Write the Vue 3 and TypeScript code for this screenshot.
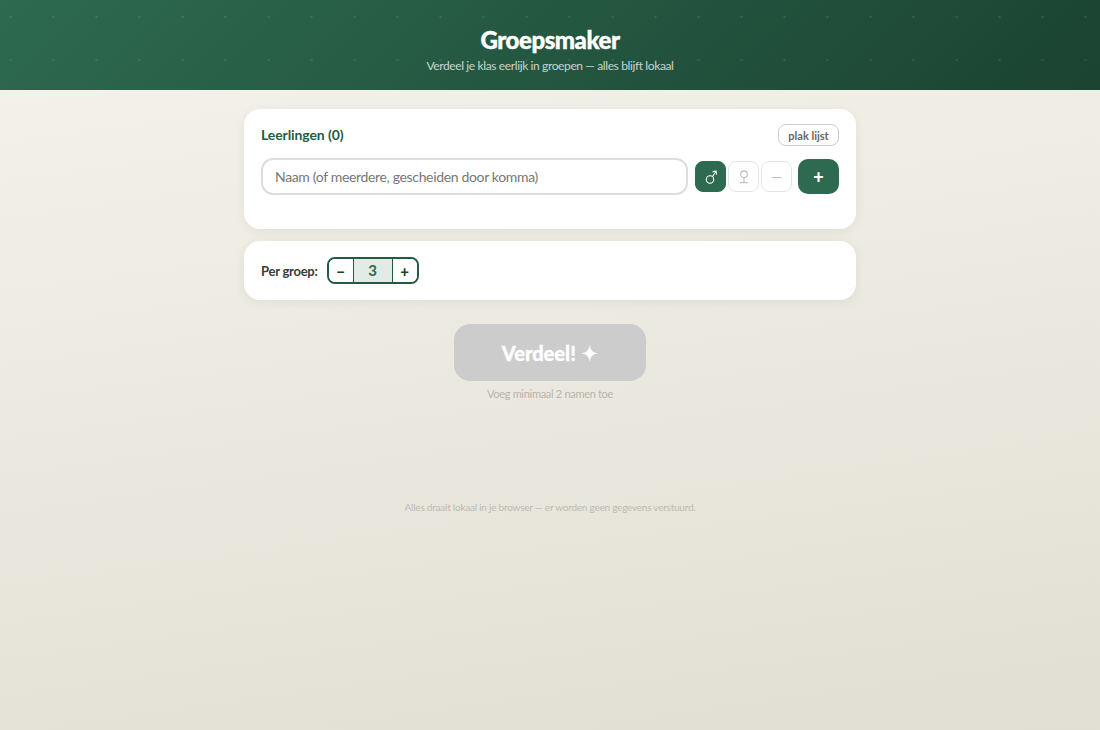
<script setup lang="ts">
import { ref } from 'vue'

const name = ref('')
const perGroup = ref(3)
const gender = ref<'m' | 'f' | 'n'>('m')
</script>

<template>
  <div class="page">
    <header class="hero">
      <h1>Groepsmaker</h1>
      <p>Verdeel je klas eerlijk in groepen — alles blijft lokaal</p>
    </header>
    <main class="content">
      <section class="card students">
        <div class="card-head">
          <h2>Leerlingen (0)</h2>
          <button class="paste">plak lijst</button>
        </div>
        <div class="entry">
          <input v-model="name" class="name" placeholder="Naam (of meerdere, gescheiden door komma)" />
          <div class="genders">
            <button class="g" :class="{ on: gender === 'm' }" aria-label="jongen" @click="gender = 'm'">
              <svg width="16" height="18" viewBox="0 0 16 18" fill="none" stroke="currentColor" stroke-width="1.1">
                <circle cx="7" cy="11.5" r="3.7" />
                <path d="M9.4 8.7 13 3.2M9.6 3.6l3.5-.5.5 3.5" />
              </svg>
            </button>
            <button class="g" :class="{ on: gender === 'f' }" aria-label="meisje" @click="gender = 'f'">
              <svg width="16" height="18" viewBox="0 0 16 18" fill="none" stroke="currentColor" stroke-width="1.1">
                <circle cx="8" cy="6.2" r="3.3" />
                <path d="M8 9.5v5.2M4 14.8h8" />
              </svg>
            </button>
            <button class="g" :class="{ on: gender === 'n' }" @click="gender = 'n'">—</button>
          </div>
          <button class="add">+</button>
        </div>
      </section>
      <section class="card settings">
        <span class="label">Per groep:</span>
        <div class="stepper">
          <button @click="perGroup--">−</button>
          <span class="val">{{ perGroup }}</span>
          <button @click="perGroup++">+</button>
        </div>
      </section>
      <button class="go" disabled>Verdeel! <span class="star">✦</span></button>
      <p class="hint">Voeg minimaal 2 namen toe</p>
      <p class="foot">Alles draait lokaal in je browser — er worden geen gegevens verstuurd.</p>
    </main>
  </div>
</template>

<style>
html, body { margin: 0; }
</style>

<style scoped>
.page {
  min-height: 730px;
  background: linear-gradient(172deg, #f6f3ec 0%, #e1ded3 100%);
  font-family: Lato, "Noto Sans", sans-serif;
  color: #3a3a3a;
}
.hero {
  height: 90px;
  box-sizing: border-box;
  padding-top: 25px;
  text-align: center;
  color: #fff;
  background-image:
    radial-gradient(circle at 10.5px 17px, rgba(255,255,255,.09) 0 1px, transparent 1.3px),
    linear-gradient(135deg, #2d6a4f 0%, #1b4332 100%);
  background-size: 43px 43px, auto;
}
.hero h1 { margin: 0; font-size: 24px; line-height: 30px; font-weight: 900; letter-spacing: -.45px; -webkit-text-stroke: .4px #fff; }
.hero p { margin: 3px 0 0; font-size: 12px; line-height: 16px; letter-spacing: -.38px; color: rgba(255,255,255,.75); }
.content { width: 612px; margin: 0 auto; padding-top: 19px; display: flex; flex-direction: column; }
.card { background: #fff; border-radius: 16px; box-shadow: 0 2px 12px rgba(0,0,0,.06); box-sizing: border-box; }
.students { height: 120px; padding: 13px 17px; }
.card-head { display: flex; justify-content: space-between; align-items: center; height: 24px; }
.card-head h2 { margin: 0; font-size: 14px; font-weight: 700; letter-spacing: -.1px; color: #1f5c42; }
.paste { height: 22px; width: 61px; margin-top: 2px; padding: 0; background: #fff; border: 1px solid #ccc; border-radius: 8px; font: 700 11px Lato, sans-serif; color: #666; }
.entry { display: flex; align-items: center; margin-top: 12px; height: 37px; }
.name { width: 427px; height: 37px; box-sizing: border-box; border: 2px solid #ddd; border-radius: 12px; padding: 0 12px 1px; font: 14px Lato, sans-serif; letter-spacing: -.34px; color: #333; background: #fff; outline: none; }
.name::placeholder { color: #777; }
.genders { display: flex; gap: 2px; margin-left: 7px; }
.g { width: 31px; height: 31px; padding: 0; border: 1px solid #e5e5e5; border-radius: 8px; background: #fff; color: #bbb; font: 14px Lato, sans-serif; display: flex; align-items: center; justify-content: center; }
.g.on { background: #2d6a4f; border-color: #2d6a4f; color: #fff; }
.add { width: 41px; height: 35px; margin-left: 6px; padding: 0; background: #2d6a4f; border: 0; border-radius: 10px; color: #fff; font: 900 18px Lato, sans-serif; }
.settings { margin-top: 12px; height: 59px; padding: 0 17px; display: flex; align-items: center; gap: 9px; }
.label { font-size: 13px; font-weight: 700; letter-spacing: -.25px; }
.stepper { display: flex; height: 27px; box-sizing: border-box; border: 2px solid #1f5c42; border-radius: 8px; overflow: hidden; }
.stepper button { width: 24px; padding: 0; border: 0; background: #fff; color: #1b4332; font: 900 15px Lato, sans-serif; }
.val { width: 40px; box-sizing: border-box; border-left: 1px solid #1f5c42; border-right: 1px solid #1f5c42; background: #e3ebe6; color: #2d6a4f; text-align: center; font-weight: 700; font-size: 15px; line-height: 23px; }
.go { align-self: center; margin-top: 24px; width: 192px; height: 57px; padding: 0; border: 0; border-radius: 16px; background: #ccc; color: #fff; font: 900 20px Lato, sans-serif; -webkit-text-stroke: .3px #fff; }
.star { font-family: "DejaVu Sans", sans-serif; font-size: 21px; line-height: 20px; }
.hint { margin: 6px 0 0; text-align: center; font-size: 11px; line-height: 14px; letter-spacing: -.3px; color: #b5b5ad; }
.foot { margin: 100px 0 0; text-align: center; font-size: 10px; line-height: 13px; letter-spacing: -.23px; color: #bcbcb2; }
</style>
